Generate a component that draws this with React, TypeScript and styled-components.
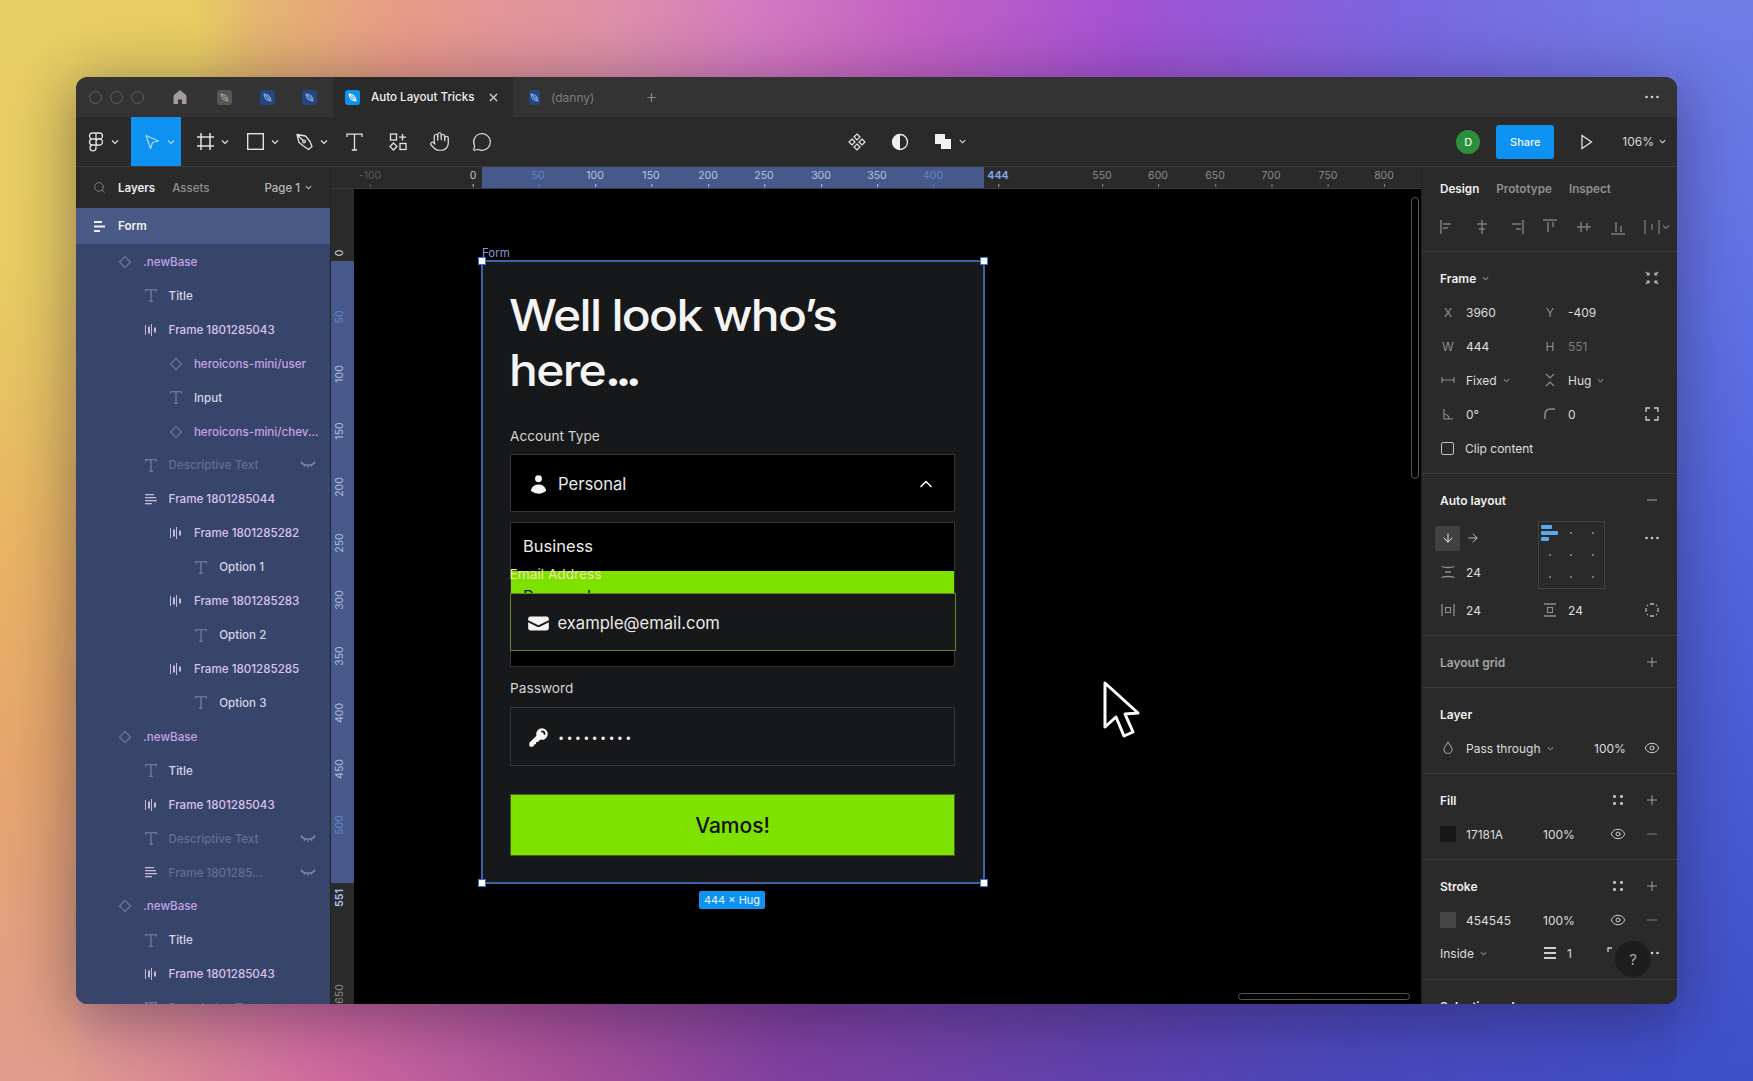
import React from "react";
import styled, { createGlobalStyle } from "styled-components";
import { Hand, MessageCircle, Search, X, Plus, ChevronUp, Minus, Eye, ArrowDown, ArrowRight } from "lucide-react";

const Global = createGlobalStyle`
  html, body { margin: 0; padding: 0; width: 100%; height: 100%; overflow: hidden; }
  body { font-family: "Inter", "Liberation Sans", sans-serif; -webkit-font-smoothing: antialiased; }
  * { box-sizing: border-box; }
  svg { display: block; flex: none; }
`;

const Page = styled.div`
  width: 1753px;
  height: 1081px;
  padding: 77px 76px;
  background:
    linear-gradient(180deg, #e8cf63 0%, #e8cd62 25%, #e8b464 50%, #e6a66c 70%, #e09c8e 100%) left top / 76px 100% no-repeat,
    linear-gradient(180deg, #6f7ce6 0%, #5f70e4 30%, #4f60d8 60%, #3f4fc6 100%) right top / 76px 100% no-repeat,
    linear-gradient(90deg, #e09c8e 4%, #cf68a0 19%, #a85098 32%, #8040a0 45%, #5e42ae 64%, #4a48bc 77%, #3f4fc6 96%) left bottom / 100% 110px no-repeat,
    linear-gradient(90deg, #e8cf63 0%, #e8cd62 11%, #e4b470 15%, #e89a88 23%, #dd90a8 35%, #d47ac0 43%, #c462c4 52%, #a452d2 64%, #7a66e0 80%, #6f7ce6 96%);
`;

const Window = styled.div`
  width: 1601px;
  height: 927px;
  border-radius: 12px;
  overflow: hidden;
  display: flex;
  flex-direction: column;
  position: relative;
  background: #2a2a2a;
  box-shadow: 0 10px 60px 6px rgba(30, 20, 50, 0.4);
`;

const TabBar = styled.div`
  height: 40px;
  flex: none;
  display: flex;
  align-items: center;
  background: #333333;
`;
const Lights = styled.div`
  width: 86px;
  padding-left: 13px;
  display: flex;
  gap: 8px;
`;
const Light = styled.span`
  width: 13px;
  height: 13px;
  border-radius: 50%;
  border: 1px solid #5f5f5f;
`;
const TabSlot = styled.div<{ $w: number }>`
  width: ${(p) => p.$w}px;
  height: 100%;
  display: flex;
  align-items: center;
  justify-content: center;
`;
const ActiveTab = styled.div`
  width: 180px;
  height: 100%;
  background: #2a2a2a;
  display: flex;
  align-items: center;
  padding-left: 12px;
  color: #f0f0f0;
  font-size: 11.6px;
  font-weight: 500;
`;
const TabTitle = styled.span`
  margin-left: 11px;
  width: 116px;
  white-space: nowrap;
`;
const IdleTab = styled.div`
  width: 102px;
  height: 100%;
  display: flex;
  align-items: center;
  padding-left: 16px;
  color: #7c7c7c;
  font-size: 12px;
`;
const Thumb = styled.span<{ $bg: string }>`
  width: 15px;
  height: 15px;
  border-radius: 3px;
  background: ${(p) => p.$bg};
  display: flex;
  align-items: center;
  justify-content: center;
`;
const TabEnd = styled.div`
  margin-left: auto;
  padding-right: 17px;
  color: #cfcfcf;
`;

const Toolbar = styled.div`
  height: 50px;
  flex: none;
  display: flex;
  align-items: stretch;
  background: #2a2a2a;
  border-bottom: 1px solid #3a3a3a;
  color: #e2e2e2;
`;
const Tool = styled.div<{ $w: number; $pl?: number; $active?: boolean }>`
  width: ${(p) => p.$w}px;
  padding-left: ${(p) => (p.$pl === undefined ? 0 : p.$pl)}px;
  display: flex;
  align-items: center;
  justify-content: ${(p) => (p.$pl === undefined ? "center" : "flex-start")};
  gap: 6px;
  background: ${(p) => (p.$active ? "#0d92f2" : "transparent")};
  color: ${(p) => (p.$active ? "#b5dcfb" : "inherit")};
`;
const CenterTools = styled.div`
  margin-left: 329px;
  display: flex;
`;
const RightTools = styled.div`
  margin-left: auto;
  display: flex;
  align-items: center;
  padding-right: 10px;
`;
const Avatar = styled.span`
  width: 24px;
  height: 24px;
  border-radius: 50%;
  background: #2c8f3b;
  color: #e8f3e8;
  font-size: 11px;
  font-weight: 500;
  display: flex;
  align-items: center;
  justify-content: center;
`;
const ShareBtn = styled.div`
  width: 58px;
  height: 34px;
  margin-left: 16px;
  border-radius: 3px;
  background: #0d92f2;
  color: #f2f8ff;
  font-size: 11px;
  font-weight: 500;
  display: flex;
  align-items: center;
  justify-content: center;
`;
const PlayWrap = styled.span`
  margin-left: 24px;
`;
const ZoomText = styled.span`
  margin-left: 28px;
  font-size: 12px;
  color: #d8d8d8;
  display: flex;
  align-items: center;
  gap: 4px;
`;

const Main = styled.div`
  flex: 1;
  min-height: 0;
  display: grid;
  grid-template-columns: 254px 1092px 255px;
`;

const LeftPanel = styled.div`
  background: #38456a;
  overflow: hidden;
  display: flex;
  flex-direction: column;
`;
const LeftHead = styled.div`
  height: 41px;
  flex: none;
  background: #2a2a2a;
  display: flex;
  align-items: center;
  padding-left: 17px;
  font-size: 11.5px;
  font-weight: 600;
  color: #eeeeee;
`;
const HeadDim = styled.span`
  margin-left: 17px;
  color: #8f8f8f;
  font-weight: 500;
`;
const HeadLabel = styled.span`
  margin-left: 12px;
`;
const PageSel = styled.span`
  margin-left: 55px;
  display: flex;
  align-items: center;
  gap: 4px;
  color: #b9b9b9;
  font-weight: 500;
`;
const FormRow = styled.div`
  height: 36px;
  flex: none;
  margin-bottom: 1px;
  background: #4a5a86;
  display: flex;
  align-items: center;
  padding-left: 18px;
  gap: 12px;
  color: #f2f2f2;
  font-size: 11.7px;
  font-weight: 600;
`;
const LayerRow = styled.div<{ $level: number; $kind: string; $hidden?: boolean }>`
  height: 33.93px;
  flex: none;
  display: flex;
  align-items: center;
  gap: 10px;
  padding-left: ${(p) => 16 + p.$level * 25.3}px;
  padding-right: 14px;
  font-size: 11.6px;
  font-weight: 500;
  white-space: nowrap;
  color: ${(p) =>
    p.$hidden ? "#646e90" : p.$kind === "text" ? "#d6d6e4" : p.$kind === "comp" ? "#c8a2e6" : "#dcc2ec"};
`;
const LayerIcon = styled.span<{ $tone: string }>`
  width: 16px;
  flex: none;
  display: flex;
  justify-content: center;
  color: ${(p) => p.$tone};
`;
const LayerName = styled.span`
  flex: 1;
`;
const HiddenMark = styled.span`
  color: #7a84a6;
`;

const Center = styled.div`
  display: grid;
  grid-template-columns: 23px 1fr;
  grid-template-rows: 22px 1fr;
  min-height: 0;
  border-left: 1px solid #222;
  border-right: 1px solid #222;
`;
const Corner = styled.div`
  background: #2a2a2a;
  border-bottom: 1px solid #3a3a3a;
`;
const HRuler = styled.div`
  position: relative;
  background: #2a2a2a;
  border-bottom: 1px solid #3a3a3a;
  overflow: hidden;
`;
const HBand = styled.div`
  position: absolute;
  top: 0;
  bottom: 0;
  left: 128px;
  width: 502px;
  background: #47598a;
`;
const HTick = styled.span<{ $c: string; $bold?: boolean }>`
  position: absolute;
  top: 2px;
  transform: translateX(-50%);
  font-size: 10.5px;
  line-height: 14px;
  font-weight: ${(p) => (p.$bold ? 700 : 400)};
  color: ${(p) => p.$c};
  &::after {
    content: "";
    position: absolute;
    left: 50%;
    top: 15px;
    width: 1px;
    height: 3px;
    background: ${(p) => p.$c};
  }
`;
const VRuler = styled.div`
  position: relative;
  background: #2a2a2a;
  overflow: hidden;
`;
const VBand = styled.div`
  position: absolute;
  left: 0;
  right: 0;
  top: 72px;
  height: 622px;
  background: #47598a;
`;
const VTick = styled.span<{ $c: string; $bold?: boolean }>`
  position: absolute;
  left: 2px;
  transform: translateY(-50%) rotate(180deg);
  writing-mode: vertical-rl;
  font-size: 10.5px;
  line-height: 14px;
  font-weight: ${(p) => (p.$bold ? 700 : 400)};
  color: ${(p) => p.$c};
`;
const Canvas = styled.div`
  position: relative;
  background: #000;
  overflow: hidden;
`;
const FrameLabel = styled.span`
  position: absolute;
  left: 128px;
  top: 57px;
  font-size: 11.5px;
  line-height: 14px;
  color: #7d9bd6;
`;
const FrameBox = styled.div`
  position: absolute;
  left: 129px;
  top: 73px;
  width: 500px;
  height: 620px;
  background: #17181a;
  outline: 2px solid #3c62a8;
  padding: 26px 28px 0 27px;
  display: flex;
  flex-direction: column;
`;
const Handle = styled.span<{ $x: string; $y: string }>`
  position: absolute;
  width: 8px;
  height: 8px;
  background: #fff;
  border: 1px solid #3c72d0;
  ${(p) => p.$x}: -5px;
  ${(p) => p.$y}: -5px;
  z-index: 3;
`;
const Heading = styled.h1`
  margin: 0 0 0 -1px;
  font-family: "Inter", sans-serif;
  font-size: 44px;
  line-height: 55px;
  font-weight: 500;
  letter-spacing: -0.035em;
  color: #f4f4f4;
  transform: scaleX(1.09);
  transform-origin: left center;
`;
const TightDots = styled.span`
  letter-spacing: -0.12em;
  font-weight: 700;
`;
const FieldLabel = styled.div`
  font-size: 13.7px;
  line-height: 20px;
  color: #d4d4d4;
`;
const SelectBox = styled.div`
  height: 58px;
  margin-top: 8px;
  background: #000;
  border: 1.5px solid #333538;
  display: flex;
  align-items: center;
  padding: 2px 18px 0 16px;
  gap: 8px;
  color: #e9e9e9;
  font-size: 16.6px;
`;
const InputBox = styled(SelectBox)`
  background: #17181a;
  margin-top: 9px;
  height: 59px;
`;
const ChevSlot = styled.span`
  margin-left: auto;
  color: #f2f2f2;
`;
const DropList = styled.div`
  position: relative;
  height: 145px;
  margin-top: 10px;
  background: #000;
  border: 1.5px solid #333538;
`;
const OptionText = styled.div`
  padding: 11px 12px;
  font-size: 16.5px;
  line-height: 24px;
  color: #ececec;
`;
const GreenBand = styled.div`
  position: absolute;
  left: 0;
  right: 0;
  top: 48px;
  height: 22px;
  background: #7ee200;
  overflow: hidden;
  color: #111;
  font-size: 16.5px;
  line-height: 24px;
  padding: 13px 12px 0;
`;
const EmailField = styled.div`
  position: absolute;
  left: -1.5px;
  right: -1.5px;
  top: 41px;
`;
const EmailLabel = styled(FieldLabel)`
  color: #f0e6a0;
`;
const EmailBox = styled(InputBox)`
  margin-top: 0;
  height: 58px;
  position: absolute;
  top: 29px;
  left: 0;
  right: 0;
  border-color: #64852a;
`;
const Dots = styled.span`
  font-family: "Liberation Sans", sans-serif;
  font-size: 12px;
  letter-spacing: 4.2px;
  color: #f0f0f0;
  margin-left: 1px;
  padding-top: 2px;
`;
const SubmitBtn = styled.div`
  height: 62px;
  margin-top: 28px;
  background: #7ee200;
  border: 1px solid #4c5a30;
  color: #101010;
  font-size: 21px;
  font-weight: 500;
  display: flex;
  align-items: center;
  justify-content: center;
`;
const PassLabel = styled(FieldLabel)`
  margin-top: 11px;
`;
const FirstLabel = styled(FieldLabel)`
  margin-top: 28px;
`;
const SizeBadge = styled.span`
  position: absolute;
  left: 345px;
  top: 702px;
  width: 66px;
  height: 18px;
  border-radius: 2px;
  background: #0d92f2;
  color: #e6f2ff;
  font-size: 11px;
  display: flex;
  align-items: center;
  justify-content: center;
`;
const CursorMark = styled.span`
  position: absolute;
  left: 748px;
  top: 491px;
`;
const VScroll = styled.span`
  position: absolute;
  left: 1057px;
  top: 8px;
  width: 8px;
  height: 282px;
  border: 1.5px solid #565656;
  border-radius: 4px;
`;
const HScroll = styled.span`
  position: absolute;
  left: 884px;
  top: 804px;
  width: 172px;
  height: 7px;
  border: 1.5px solid #565656;
  border-radius: 4px;
`;

const RightPanel = styled.div`
  background: #2a2a2a;
  overflow: hidden;
  color: #dedede;
  font-size: 12px;
  position: relative;
`;
const PanelTabs = styled.div`
  height: 43px;
  display: flex;
  align-items: center;
  padding-left: 18px;
  gap: 17px;
  font-size: 11.7px;
  font-weight: 600;
  color: #8f8f8f;
`;
const PanelTab = styled.span<{ $on?: boolean }>`
  color: ${(p) => (p.$on ? "#efefef" : "#8f8f8f")};
`;
const AlignRow = styled.div`
  height: 41px;
  padding: 9px 0 0 18px;
  display: flex;
  gap: 18px;
  color: #7c7c7c;
`;
const AlignChev = styled.span`
  margin: 3px 0 0 -17px;
`;
const Section = styled.div<{ $pb?: number; $pt?: number }>`
  border-top: 1px solid #3a3a3a;
  padding-top: ${(p) => (p.$pt === undefined ? 9 : p.$pt)}px;
  padding-bottom: ${(p) => (p.$pb === undefined ? 8 : p.$pb)}px;
`;
const SectionHead = styled.div<{ $dim?: boolean }>`
  height: 34px;
  padding: 0 17px 0 18px;
  display: flex;
  align-items: center;
  font-weight: 600;
  color: ${(p) => (p.$dim ? "#a5a5a5" : "#efefef")};
`;
const HeadChev = styled.span`
  margin-left: 5px;
  color: #8a8a8a;
`;
const HeadIcons = styled.span`
  margin-left: auto;
  display: flex;
  align-items: center;
  gap: 20px;
  color: #b9b9b9;
`;
const PropRow = styled.div`
  height: 34px;
  padding-left: 18px;
  display: grid;
  grid-template-columns: 16px 66px 16px 66px 16px;
  column-gap: 10px;
  align-items: center;
`;
const IconCell = styled.span<{ $c?: string; $start?: boolean }>`
  display: flex;
  justify-content: ${(p) => (p.$start ? "flex-start" : "center")};
  color: ${(p) => p.$c || "#8f8f8f"};
  font-size: 12px;
`;
const Val = styled.span<{ $dim?: boolean; $pl?: number }>`
  color: ${(p) => (p.$dim ? "#7c7c7c" : "#dedede")};
  display: flex;
  align-items: center;
  gap: 5px;
  padding-left: ${(p) => p.$pl || 0}px;
`;
const DimChev = styled.span`
  color: #808080;
`;
const CheckLine = styled.div`
  height: 34px;
  padding-left: 19px;
  display: flex;
  align-items: center;
  gap: 11px;
`;
const CheckBox = styled.span`
  width: 13px;
  height: 13px;
  border: 1.5px solid #c0c0c0;
  border-radius: 2px;
`;
const AutoGrid = styled.div`
  padding: 4px 0 0 18px;
  display: grid;
  grid-template-columns: 16px 66px 16px 66px 16px;
  grid-template-rows: 34px 34px 4px 34px;
  column-gap: 10px;
  align-items: center;
`;
const AxisTile = styled.span`
  width: 25px;
  height: 25px;
  margin-left: -5px;
  background: #414141;
  border-radius: 2px;
  color: #e6e6e6;
  display: flex;
  align-items: center;
  justify-content: center;
`;
const AlignBox = styled.div`
  grid-column: 3 / 5;
  grid-row: 1 / 3;
  width: 67px;
  height: 68px;
  margin-left: -4px;
  border: 1px solid #414141;
  display: grid;
  grid-template-columns: repeat(3, 1fr);
  grid-template-rows: repeat(3, 1fr);
  place-items: center;
  position: relative;
`;
const AlignDot = styled.span`
  width: 2px;
  height: 2px;
  background: #777;
`;
const AlignBars = styled.span`
  display: flex;
  flex-direction: column;
  gap: 2px;
`;
const AlignBar = styled.span<{ $w: number }>`
  width: ${(p) => p.$w}px;
  height: 4px;
  background: #5ba7ec;
  border-radius: 1px;
`;
const PlainGridSpacer = styled.span`
  grid-column: 1 / -1;
`;
const RowRight = styled.span`
  grid-column: 5;
  display: flex;
  justify-content: center;
  color: #d0d0d0;
`;
const LayerGrid = styled.div`
  height: 34px;
  padding-left: 18px;
  display: grid;
  grid-template-columns: 16px 118px 40px 16px;
  column-gap: 10px;
  align-items: center;
`;
const PaintGrid = styled.div`
  height: 34px;
  padding-left: 18px;
  display: grid;
  grid-template-columns: 16px 67px 57px 24px 16px;
  column-gap: 10px;
  align-items: center;
`;
const Swatch = styled.span<{ $bg: string }>`
  width: 16px;
  height: 16px;
  background: ${(p) => p.$bg};
  border-radius: 1px;
`;
const StrokeOpts = styled.div`
  height: 34px;
  margin: -1px 0 1px;
  padding-left: 18px;
  display: grid;
  grid-template-columns: 102px 16px 40px 30px 32px;
  align-items: center;
`;
const EndCell = styled.span`
  display: flex;
  justify-content: flex-end;
  color: #cfcfcf;
`;
const HelpBubble = styled.span`
  position: absolute;
  right: 26px;
  bottom: 27px;
  width: 36px;
  height: 36px;
  border-radius: 50%;
  background: #1d1d1d;
  color: #a8a8a8;
  font-size: 15px;
  display: flex;
  align-items: center;
  justify-content: center;
`;

const Chev = ({ s = 10 }: { s?: number }) => (
  <svg width={s} height={s} viewBox="0 0 10 10" fill="none" stroke="currentColor" strokeWidth="1.2"><path d="M2 3.5 5 6.5 8 3.5" /></svg>
);
const Leaf = ({ c }: { c: string }) => (
  <svg width="11" height="11" viewBox="0 0 11 11" fill="none" stroke={c} strokeWidth="1.1"><path d="M2 2c4 0 7 3 7 7-4 0-7-3-7-7zM2 2l7 7" /></svg>
);
const HomeIcon = () => (
  <svg width="16" height="16" viewBox="0 0 16 16" fill="#a39aa3"><path d="M8 1 1.500 6.500V15H6v-4.500h4V15h4.500V6.500z" /></svg>
);
const FigmaIcon = () => (
  <svg width="16" height="20" viewBox="0 0 16 20" fill="none" stroke="currentColor" strokeWidth="1.3">
    <path d="M8 1H4.500a3 3 0 0 0 0 6H8zM8 1h3.500a3 3 0 0 1 0 6H8zM8 7H4.500a3 3 0 0 0 0 6H8zM8 13H4.500a3 3 0 1 0 3.500 3zM14.500 10a3 3 0 1 1-6.500 0 3 3 0 0 1 6.500 0z" />
  </svg>
);
const MoveIcon = () => (
  <svg width="16" height="16" viewBox="0 0 16 16" fill="none" stroke="currentColor" strokeWidth="1.2" strokeLinejoin="round"><path d="M2 1.500 14.500 7 8.500 8.500 6.500 14.500z" /></svg>
);
const FrameTool = () => (
  <svg width="17" height="17" viewBox="0 0 17 17" fill="none" stroke="currentColor" strokeWidth="1.5"><path d="M4 0v17M13 0v17M0 4h17M0 13h17" /></svg>
);
const RectTool = () => (
  <svg width="17" height="17" viewBox="0 0 17 17" fill="none" stroke="currentColor" strokeWidth="1.4"><rect x=".7" y=".7" width="15.6" height="15.600" /></svg>
);
const PenTool = () => (
  <svg width="17" height="18" viewBox="0 0 17 18" fill="none" stroke="currentColor" strokeWidth="1.3" strokeLinejoin="round"><path d="M1 1.500 9.500 3 14 8.500 16 13.500 12.500 16.500 7.500 13 3 9.500zM1 1.500l6 6" /><circle cx="8" cy="8.500" r="1.300" /></svg>
);
const TextTool = () => (
  <svg width="17" height="18" viewBox="0 0 17 18" fill="none" stroke="currentColor" strokeWidth="1.300"><path d="M1 4V1.200h15V4M8.500 1.200V17M5.800 17h5.400" /></svg>
);
const WidgetsTool = () => (
  <svg width="18" height="18" viewBox="0 0 18 18" fill="none" stroke="currentColor" strokeWidth="1.300"><rect x="1.500" y="1" width="6" height="6" /><path d="M13.500 1v6.500M10 4.200h7M4.500 10l3.500 3.500-3.500 3.500L1 13.500z" /><rect x="11" y="10.500" width="6" height="6" /></svg>
);
const DiamondsTool = () => (
  <svg width="18" height="18" viewBox="0 0 18 18" fill="none" stroke="currentColor" strokeWidth="1.200"><path d="M9 1l3 3-3 3-3-3zM4 6l3 3-3 3-3-3zM14 6l3 3-3 3-3-3zM9 11l3 3-3 3-3-3z" /></svg>
);
const MaskTool = () => (
  <svg width="18" height="18" viewBox="0 0 18 18"><circle cx="9" cy="9" r="7.500" fill="none" stroke="#eee" strokeWidth="1.300" /><path d="M9 1.500a7.500 7.500 0 0 0 0 15z" fill="#eee" /></svg>
);
const UnionTool = () => (
  <svg width="17" height="17" viewBox="0 0 17 17" fill="#f2f2f2"><path d="M0 1h10v5h6v10H6v-5H0z" /></svg>
);
const PlayIcon = () => (
  <svg width="16" height="16" viewBox="0 0 16 16" fill="none" stroke="#e2e2e2" strokeWidth="1.300"><path d="M4 1.500v13L13.500 8z" /></svg>
);
const DiamondIcon = ({ s = 11 }: { s?: number }) => (
  <svg width={s + 3} height={s + 3} viewBox="0 0 14 14" fill="none" stroke="currentColor" strokeWidth="1.300"><path d="M7 1.500 12.500 7 7 12.500 1.500 7z" /></svg>
);
const TIcon = () => (
  <svg width="12" height="13" viewBox="0 0 12 13" fill="none" stroke="currentColor" strokeWidth="1.100"><path d="M.6 2.500V.8h10.800v1.700M6 .8v11.400M4 12.200h4" /></svg>
);
const ColsIcon = () => (
  <svg width="12" height="12" viewBox="0 0 12 12" fill="currentColor"><rect x="0" y="1" width="1" height="10" /><rect x="3" y="2.500" width="2" height="7" /><rect x="6" y="0" width="1" height="12" /><rect x="9" y="3.500" width="2" height="5" /></svg>
);
const RowsIcon = () => (
  <svg width="12" height="11" viewBox="0 0 12 11" fill="currentColor"><rect x="0" y="0" width="9" height="1.300" /><rect x="0" y="3" width="11" height="1.300" /><rect x="0" y="6" width="12" height="1.300" /><rect x="0" y="9" width="7" height="1.300" /></svg>
);
const ClosedEye = () => (
  <svg width="16" height="8" viewBox="0 0 16 8" fill="none" stroke="currentColor" strokeWidth="1.200"><path d="M1 1.500C4 5 12 5 15 1.500M1 .5l2 2M15 .5l-2 2M5 3.800 4 6M11 3.800 12 6M8 4.500V7" /></svg>
);
const FormRowsIcon = () => (
  <svg width="12" height="11" viewBox="0 0 12 11" fill="#f0f0f0"><rect y="0" width="8" height="2" /><rect y="4.500" width="11" height="2" /><rect y="9" width="6" height="2" /></svg>
);
const Glyph = ({ children, w = 16, h = 16 }: { children: React.ReactNode; w?: number; h?: number }) => (
  <svg width={w} height={h} viewBox={`0 0 ${w} ${h}`} fill="none" stroke="currentColor" strokeWidth="1.100">{children}</svg>
);
const UserIcon = () => (
  <svg width="23" height="23" viewBox="0 0 20 20" fill="#f5f5f5"><path d="M10 8a3 3 0 100-6 3 3 0 000 6zM3.465 14.493a1.23 1.23 0 00.41 1.412A9.957 9.957 0 0010 18c2.31 0 4.438-.784 6.131-2.1.43-.333.604-.903.408-1.41a7.002 7.002 0 00-13.074.003z" /></svg>
);
const MailIcon = () => (
  <svg width="23" height="23" viewBox="0 0 20 20" fill="#f5f5f5"><path d="M3 4a2 2 0 00-2 2v1.161l8.441 4.221a1.25 1.25 0 001.118 0L19 7.162V6a2 2 0 00-2-2H3z" /><path d="M19 8.839l-7.77 3.885a2.75 2.75 0 01-2.46 0L1 8.839V14a2 2 0 002 2h14a2 2 0 002-2V8.839z" /></svg>
);
const KeyIcon = () => (
  <svg width="23" height="23" viewBox="0 0 20 20" fill="#f5f5f5"><path fillRule="evenodd" clipRule="evenodd" d="M8 7a5 5 0 113.61 4.804l-1.903 1.903A1 1 0 019 14H8v1a1 1 0 01-1 1H6v1a1 1 0 01-1 1H3a1 1 0 01-1-1v-2a1 1 0 01.293-.707L8.196 8.39A5.002 5.002 0 018 7zm5-3a.75.75 0 000 1.5A1.5 1.5 0 0114.5 7 .75.75 0 0016 7a3 3 0 00-3-3z" /></svg>
);
const Grip = () => (
  <svg width="12" height="12" viewBox="0 0 12 12" fill="currentColor"><rect x="1" y="1" width="3" height="3" rx="1" /><rect x="8" y="1" width="3" height="3" rx="1" /><rect x="1" y="8" width="3" height="3" rx="1" /><rect x="8" y="8" width="3" height="3" rx="1" /></svg>
);
const More = () => (
  <svg width="16" height="4" viewBox="0 0 16 4" fill="currentColor"><circle cx="2.500" cy="2" r="1.300" /><circle cx="8" cy="2" r="1.300" /><circle cx="13.500" cy="2" r="1.300" /></svg>
);

const layers = [
  { n: ".newBase", l: 1, k: "comp" },
  { n: "Title", l: 2, k: "text" },
  { n: "Frame 1801285043", l: 2, k: "cols" },
  { n: "heroicons-mini/user", l: 3, k: "comp" },
  { n: "Input", l: 3, k: "text" },
  { n: "heroicons-mini/chev...", l: 3, k: "comp" },
  { n: "Descriptive Text", l: 2, k: "text", h: true },
  { n: "Frame 1801285044", l: 2, k: "rows" },
  { n: "Frame 1801285282", l: 3, k: "cols" },
  { n: "Option 1", l: 4, k: "text" },
  { n: "Frame 1801285283", l: 3, k: "cols" },
  { n: "Option 2", l: 4, k: "text" },
  { n: "Frame 1801285285", l: 3, k: "cols" },
  { n: "Option 3", l: 4, k: "text" },
  { n: ".newBase", l: 1, k: "comp" },
  { n: "Title", l: 2, k: "text" },
  { n: "Frame 1801285043", l: 2, k: "cols" },
  { n: "Descriptive Text", l: 2, k: "text", h: true },
  { n: "Frame 1801285...", l: 2, k: "rows", h: true },
  { n: ".newBase", l: 1, k: "comp" },
  { n: "Title", l: 2, k: "text" },
  { n: "Frame 1801285043", l: 2, k: "cols" },
  { n: "Descriptive Text", l: 2, k: "text", h: true },
];

const hTicks: [string, number, string, boolean?][] = [
  ["-100", 370, "#5a5a5a"], ["0", 473, "#c4c4c4"], ["50", 538, "#5f86cc"], ["100", 595, "#b6c3e2"],
  ["150", 651, "#b6c3e2"], ["200", 708, "#b6c3e2"], ["250", 764, "#b6c3e2"], ["300", 821, "#b6c3e2"],
  ["350", 877, "#b6c3e2"], ["400", 933, "#5f86cc"], ["444", 998, "#7fa3e6", true], ["550", 1102, "#8a8a8a"],
  ["600", 1158, "#8a8a8a"], ["650", 1215, "#8a8a8a"], ["700", 1271, "#8a8a8a"], ["750", 1328, "#8a8a8a"],
  ["800", 1384, "#8a8a8a"],
];
const vTicks: [string, number, string, boolean?][] = [
  ["0", 253, "#d4d4d4"], ["50", 317, "#5f86cc"], ["100", 374, "#aebbdd"], ["150", 431, "#aebbdd"],
  ["200", 487, "#aebbdd"], ["250", 543, "#aebbdd"], ["300", 600, "#aebbdd"], ["350", 656, "#aebbdd"],
  ["400", 713, "#aebbdd"], ["450", 769, "#aebbdd"], ["500", 825, "#5f86cc"], ["551", 898, "#a9c0ee", true],
  ["650", 994, "#8a8a8a"],
];

const layerGlyph = (k: string) => {
  if (k === "comp") return <DiamondIcon />;
  if (k === "text") return <TIcon />;
  if (k === "cols") return <ColsIcon />;
  return <RowsIcon />;
};
const layerTone = (k: string) => (k === "comp" ? "#65739a" : k === "text" ? "#7a87aa" : "#c4bad6");

export default function App() {
  return (
    <Page>
      <Global />
      <Window>
        <TabBar>
          <Lights><Light /><Light /><Light /></Lights>
          <TabSlot $w={36}><HomeIcon /></TabSlot>
          <TabSlot $w={52}><Thumb $bg="#565656"><Leaf c="#8f9a7c" /></Thumb></TabSlot>
          <TabSlot $w={35}><Thumb $bg="#24467f"><Leaf c="#7fa2dc" /></Thumb></TabSlot>
          <TabSlot $w={48}><Thumb $bg="#24467f"><Leaf c="#7fa2dc" /></Thumb></TabSlot>
          <ActiveTab>
            <Thumb $bg="#0d92f2"><Leaf c="#e8f4ff" /></Thumb>
            <TabTitle>Auto Layout Tricks</TabTitle>
            <X size={13} strokeWidth={2.2} color="#d8d8d8" />
          </ActiveTab>
          <IdleTab>
            <Thumb $bg="#24467f"><Leaf c="#7fa2dc" /></Thumb>
            <TabTitle>(danny)</TabTitle>
          </IdleTab>
          <TabSlot $w={72}><Plus size={13} color="#8a8a8a" strokeWidth={2.2} /></TabSlot>
          <TabEnd><More /></TabEnd>
        </TabBar>

        <Toolbar>
          <Tool $w={55} $pl={12}><FigmaIcon /><Chev /></Tool>
          <Tool $w={50} $pl={13} $active><MoveIcon /><Chev /></Tool>
          <Tool $w={55} $pl={16}><FrameTool /><Chev /></Tool>
          <Tool $w={46} $pl={11}><RectTool /><Chev /></Tool>
          <Tool $w={50} $pl={14}><PenTool /><Chev /></Tool>
          <Tool $w={44}><TextTool /></Tool>
          <Tool $w={44}><WidgetsTool /></Tool>
          <Tool $w={38}><Hand size={21} strokeWidth={1.4} /></Tool>
          <Tool $w={48}><MessageCircle size={20} strokeWidth={1.4} /></Tool>
          <CenterTools>
            <Tool $w={44}><DiamondsTool /></Tool>
            <Tool $w={42}><MaskTool /></Tool>
            <Tool $w={60} $pl={14}><UnionTool /><Chev s={9} /></Tool>
          </CenterTools>
          <RightTools>
            <Avatar>D</Avatar>
            <ShareBtn>Share</ShareBtn>
            <PlayWrap><PlayIcon /></PlayWrap>
            <ZoomText>106% <Chev s={9} /></ZoomText>
          </RightTools>
        </Toolbar>

        <Main>
          <LeftPanel>
            <LeftHead>
              <Search size={13} color="#8a8a8a" strokeWidth={1.5} />
              <HeadLabel>Layers</HeadLabel>
              <HeadDim>Assets</HeadDim>
              <PageSel>Page 1 <Chev s={9} /></PageSel>
            </LeftHead>
            <FormRow><FormRowsIcon />Form</FormRow>
            {layers.map((r, i) => (
              <LayerRow key={i} $level={r.l} $kind={r.k} $hidden={r.h}>
                <LayerIcon $tone={layerTone(r.k)}>{layerGlyph(r.k)}</LayerIcon>
                <LayerName>{r.n}</LayerName>
                {r.h && <HiddenMark><ClosedEye /></HiddenMark>}
              </LayerRow>
            ))}
          </LeftPanel>

          <Center>
            <Corner />
            <HRuler>
              <HBand />
              {hTicks.map(([t, x, c, b]) => (
                <HTick key={t} $c={c} $bold={b} style={{ left: x - 354 }}>{t}</HTick>
              ))}
            </HRuler>
            <VRuler>
              <VBand />
              {vTicks.map(([t, y, c, b]) => (
                <VTick key={t} $c={c} $bold={b} style={{ top: y - 189 }}>{t}</VTick>
              ))}
            </VRuler>
            <Canvas>
              <FrameLabel>Form</FrameLabel>
              <FrameBox>
                <Handle $x="left" $y="top" />
                <Handle $x="right" $y="top" />
                <Handle $x="left" $y="bottom" />
                <Handle $x="right" $y="bottom" />
                <Heading>Well look who’s<br />here<TightDots>...</TightDots></Heading>
                <FirstLabel>Account Type</FirstLabel>
                <SelectBox>
                  <UserIcon />
                  Personal
                  <ChevSlot><ChevronUp size={20} strokeWidth={2} /></ChevSlot>
                </SelectBox>
                <DropList>
                  <OptionText>Business</OptionText>
                  <GreenBand>Personal</GreenBand>
                  <EmailField>
                    <EmailLabel>Email Address</EmailLabel>
                    <EmailBox><MailIcon />example@email.com</EmailBox>
                  </EmailField>
                </DropList>
                <PassLabel>Password</PassLabel>
                <InputBox><KeyIcon /><Dots>•••••••••</Dots></InputBox>
                <SubmitBtn>Vamos!</SubmitBtn>
              </FrameBox>
              <SizeBadge>444 × Hug</SizeBadge>
              <CursorMark>
                <svg width="38" height="60" viewBox="0 0 38 60" fill="#000" stroke="#fff" strokeWidth="3" strokeLinejoin="round">
                  <path d="M3 3v44l11-10 8 19 9-4-8-18 13-1z" />
                </svg>
              </CursorMark>
              <VScroll />
              <HScroll />
            </Canvas>
          </Center>

          <RightPanel>
            <PanelTabs>
              <PanelTab $on>Design</PanelTab>
              <PanelTab>Prototype</PanelTab>
              <PanelTab>Inspect</PanelTab>
            </PanelTabs>
            <AlignRow>
              <Glyph><path d="M1 1v14M3 5h8M3 9h5" strokeWidth="1.500" /></Glyph>
              <Glyph><path d="M8 1v14M3 5h10M5 10h6" strokeWidth="1.500" /></Glyph>
              <Glyph><path d="M15 1v14M4 5h9M8 10h5" strokeWidth="1.500" /></Glyph>
              <Glyph><path d="M1 1h14M6 3v10M11 3v5" strokeWidth="1.500" /></Glyph>
              <Glyph><path d="M1 8h14M5 3v10M11 4v8" strokeWidth="1.500" /></Glyph>
              <Glyph><path d="M1 15h14M6 3v10M11 7v6" strokeWidth="1.500" /></Glyph>
              <Glyph><path d="M1 1v14M8 5v6M15 1v14" strokeWidth="1.300" /></Glyph>
              <AlignChev><Chev /></AlignChev>
            </AlignRow>

            <Section $pb={8}>
              <SectionHead>Frame<HeadChev><Chev s={9} /></HeadChev>
                <HeadIcons><Glyph><path d="M2 2l3 3M5 2.500V5H2.500M14 2l-3 3M11 2.500V5h2.500M2 14l3-3M5 13.500V11H2.500M14 14l-3-3M11 13.500V11h2.500" strokeWidth="1.200" /></Glyph></HeadIcons>
              </SectionHead>
              <PropRow>
                <IconCell>X</IconCell><Val>3960</Val>
                <IconCell>Y</IconCell><Val>-409</Val>
              </PropRow>
              <PropRow>
                <IconCell>W</IconCell><Val>444</Val>
                <IconCell>H</IconCell><Val $dim>551</Val>
              </PropRow>
              <PropRow>
                <IconCell><Glyph><path d="M2 5v6M14 5v6M2 8h12" /></Glyph></IconCell><Val>Fixed <DimChev><Chev s={9} /></DimChev></Val>
                <IconCell><Glyph><path d="M4 2l4 4 4-4M4 14l4-4 4 4" /></Glyph></IconCell><Val>Hug <DimChev><Chev s={9} /></DimChev></Val>
              </PropRow>
              <PropRow>
                <IconCell><Glyph><path d="M4 3v10h9M4 8c3 0 5 2 5 5" /></Glyph></IconCell><Val>0°</Val>
                <IconCell><Glyph><path d="M3 13V8a5 5 0 0 1 5-5h5" strokeWidth="1.500" /></Glyph></IconCell><Val>0</Val>
                <IconCell $c="#cfcfcf"><Glyph><path d="M2 6V2h4M10 2h4v4M14 10v4h-4M6 14H2v-4" strokeWidth="1.300" /></Glyph></IconCell>
              </PropRow>
              <CheckLine><CheckBox />Clip content</CheckLine>
            </Section>

            <Section $pb={8}>
              <SectionHead>Auto layout
                <HeadIcons><Minus size={16} strokeWidth={1.300} /></HeadIcons>
              </SectionHead>
              <AutoGrid>
                <AxisTile><ArrowDown size={14} strokeWidth={1.700} /></AxisTile>
                <IconCell $c="#cfcfcf" $start><ArrowRight size={14} strokeWidth={1.500} /></IconCell>
                <AlignBox>
                  <AlignBars><AlignBar $w={11} /><AlignBar $w={17} /><AlignBar $w={8} /></AlignBars>
                  <AlignDot /><AlignDot /><AlignDot /><AlignDot /><AlignDot /><AlignDot /><AlignDot /><AlignDot />
                </AlignBox>
                <RowRight><More /></RowRight>
                <IconCell><Glyph><path d="M2 2c0 2 12 2 12 0M2 14c0-2 12-2 12 0M5 8h6" strokeWidth="1.300" /></Glyph></IconCell>
                <Val>24</Val>
                <PlainGridSpacer />
                <IconCell><Glyph><path d="M2 2v12M14 2v12" strokeWidth="1.300" /><rect x="5.500" y="5.500" width="5" height="5" /></Glyph></IconCell>
                <Val>24</Val>
                <IconCell><Glyph><path d="M2 2h12M2 14h12" strokeWidth="1.300" /><rect x="5.500" y="5.500" width="5" height="5" /></Glyph></IconCell>
                <Val>24</Val>
                <IconCell $c="#b9b9b9"><Glyph><path d="M6 2h4M6 14h4M2 6v4M14 6v4" strokeWidth="1.300" /><path d="M4 3l-1 1M12 3l1 1M4 13l-1-1M12 13l1-1" /></Glyph></IconCell>
              </AutoGrid>
            </Section>

            <Section $pt={9} $pb={8}>
              <SectionHead $dim>Layout grid
                <HeadIcons><Plus size={16} strokeWidth={1.200} /></HeadIcons>
              </SectionHead>
            </Section>

            <Section>
              <SectionHead>Layer</SectionHead>
              <LayerGrid>
                <IconCell><Glyph><path d="M8 2.500c2.500 3 4 4.500 4 7a4 4 0 0 1-8 0c0-2.500 1.500-4 4-7z" strokeWidth="1.200" /></Glyph></IconCell>
                <Val>Pass through <DimChev><Chev s={9} /></DimChev></Val>
                <Val>100%</Val>
                <IconCell $c="#d8d8d8"><Eye size={16} strokeWidth={1.400} /></IconCell>
              </LayerGrid>
            </Section>

            <Section>
              <SectionHead>Fill
                <HeadIcons><Grip /><Plus size={16} strokeWidth={1.200} /></HeadIcons>
              </SectionHead>
              <PaintGrid>
                <Swatch $bg="#17181a" />
                <Val>17181A</Val>
                <Val>100%</Val>
                <IconCell $c="#d8d8d8" $start><Eye size={16} strokeWidth={1.400} /></IconCell>
                <IconCell><Minus size={16} strokeWidth={1.200} /></IconCell>
              </PaintGrid>
            </Section>

            <Section>
              <SectionHead>Stroke
                <HeadIcons><Grip /><Plus size={16} strokeWidth={1.200} /></HeadIcons>
              </SectionHead>
              <PaintGrid>
                <Swatch $bg="#454545" />
                <Val>454545</Val>
                <Val>100%</Val>
                <IconCell $c="#d8d8d8" $start><Eye size={16} strokeWidth={1.400} /></IconCell>
                <IconCell><Minus size={16} strokeWidth={1.200} /></IconCell>
              </PaintGrid>
              <StrokeOpts>
                <Val>Inside <DimChev><Chev s={9} /></DimChev></Val>
                <IconCell $c="#cfcfcf"><Glyph><path d="M2 3h12M2 8h12M2 13h12" strokeWidth="2" /></Glyph></IconCell>
                <Val $pl={9}>1</Val>
                <IconCell $c="#cfcfcf"><Glyph><path d="M3 7V3h4" strokeWidth="1.300" /></Glyph></IconCell>
                <EndCell><More /></EndCell>
              </StrokeOpts>
            </Section>

            <Section>
              <SectionHead>Selection colors</SectionHead>
            </Section>

            <HelpBubble>?</HelpBubble>
          </RightPanel>
        </Main>
      </Window>
    </Page>
  );
}
